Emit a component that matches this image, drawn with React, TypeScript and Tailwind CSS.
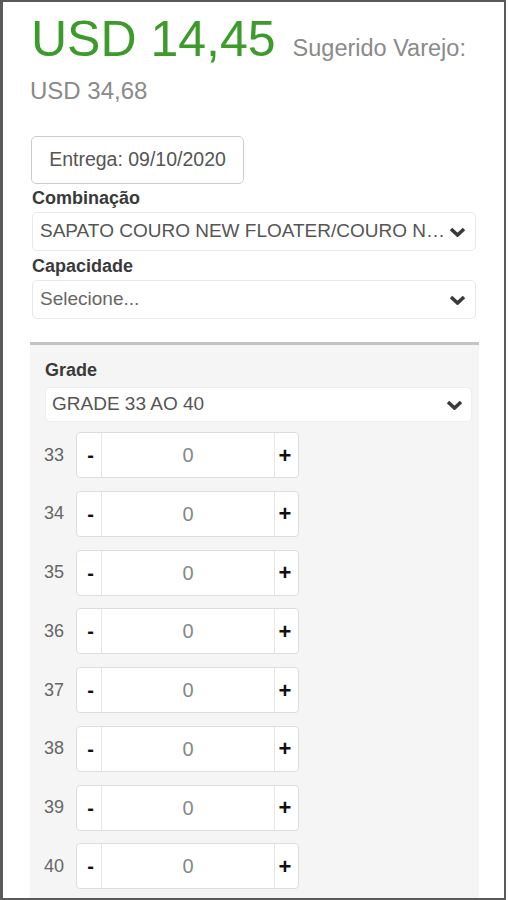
import React from 'react'

const sizes = [33, 34, 35, 36, 37, 38, 39, 40]

function Chevron() {
  return (
    <svg width="17" height="10" viewBox="0 0 17 10" className="shrink-0">
      <polyline points="2,2 8.5,8 15,2" fill="none" stroke="#3a3a3a" strokeWidth="3.6" strokeLinejoin="miter" />
    </svg>
  )
}

function Select({ text, color = 'text-[#555]' }: { text: string; color?: string }) {
  return (
    <div className="ml-[2px] flex h-[39px] w-[444px] items-center rounded-[5px] border border-[#e8e8e8] bg-white pl-[7px] pr-[9px]">
      <span className={`min-w-0 flex-1 overflow-hidden text-ellipsis whitespace-nowrap text-[19px] ${color}`}>{text}</span>
      <Chevron />
    </div>
  )
}

function Stepper({ size }: { size: number }) {
  return (
    <div className="flex h-[46px] items-center">
      <span className="-ml-[1px] w-[32px] text-[18px] text-[#666]">{size}</span>
      <div className="flex h-[46px] w-[223px] overflow-hidden rounded-[4px] border border-[#dddddd] bg-white">
        <button className="flex w-[25px] items-center justify-center border-r border-[#e6e6e6] pl-[3px] text-[20px] font-bold text-[#111]">
          -
        </button>
        <div className="flex flex-1 items-center justify-center text-[20px] text-[#888]">0</div>
        <button className="flex w-[24px] items-center justify-center border-l border-[#e6e6e6] pr-[3px] text-[22px] font-bold text-[#111]">
          +
        </button>
      </div>
    </div>
  )
}

export default function App() {
  return (
    <div className="flex h-[900px] w-[506px] flex-col overflow-hidden border-b-2 border-l-[3px] border-r-2 border-t-2 border-[#5a5a5a] bg-white pl-[27px] pr-[25px] font-['Liberation_Sans',Arial,sans-serif]">
      {/* Price */}
      <div className="ml-[1px] mt-[12px] flex items-baseline gap-[17px]">
        <span className="text-[50px] leading-[50px] text-[#3d9b2b]">USD 14,45</span>
        <span className="text-[23.5px] leading-[28px] text-[#8a8a8a]">Sugerido Varejo:</span>
      </div>
      <div className="mt-[13px] text-[24px] leading-[28px] text-[#8a8a8a]">USD 34,68</div>

      {/* Delivery */}
      <button className="ml-[1px] mt-[31px] h-[48px] w-[213px] rounded-[5px] border border-[#cccccc] bg-white text-[19.5px] text-[#555]">
        Entrega: 09/10/2020
      </button>

      <label className="ml-[2px] mt-[2px] h-[24px] text-[18px] font-bold leading-[24px] text-[#3a3a3a]">Combinação</label>
      <div className="mt-[2px]">
        <Select text="SAPATO COURO NEW FLOATER/COURO NATURAL" />
      </div>

      <label className="ml-[2px] mt-[3px] h-[24px] text-[18px] font-bold leading-[24px] text-[#3a3a3a]">Capacidade</label>
      <div className="mt-[2px]">
        <Select text="Selecione..." color="text-[#666]" />
      </div>

      <div className="mt-[23px] h-[3px] w-[449px] bg-[#c4c4c4]" />

      {/* Grade panel */}
      <div className="flex w-[449px] flex-1 flex-col bg-[#f5f5f5] pl-[15px] pr-[7px] pt-[13px]">
        <label className="h-[24px] text-[18px] font-bold leading-[24px] text-[#3a3a3a]">Grade</label>
        <div className="mt-[5px] flex h-[35px] items-center rounded-[5px] border border-[#eeeeee] bg-white pl-[6px] pr-[8px]">
          <span className="flex-1 text-[19px] text-[#555]">GRADE 33 AO 40</span>
          <Chevron />
        </div>
        <div className="mt-[10px] flex flex-col gap-[12.75px]">
          {sizes.map((s) => (
            <Stepper key={s} size={s} />
          ))}
        </div>
      </div>
    </div>
  )
}
